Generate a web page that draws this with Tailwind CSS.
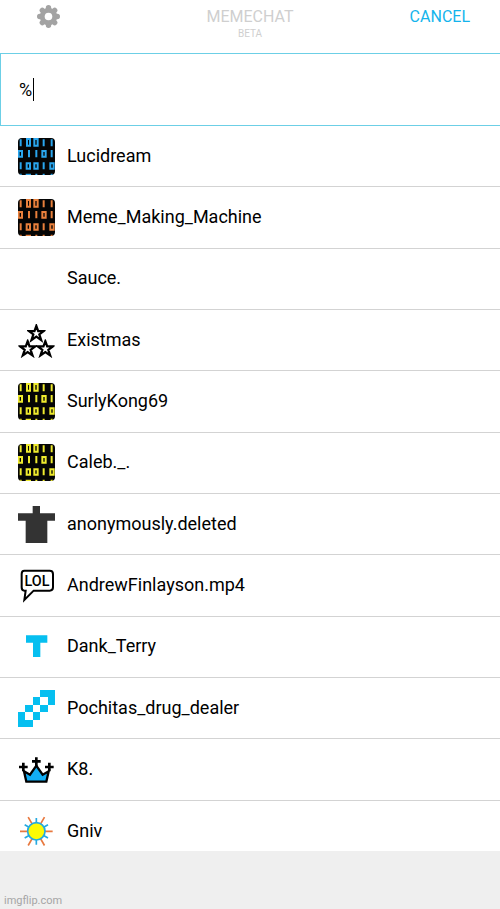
<!DOCTYPE html>
<html lang="en">
<head>
<meta charset="utf-8">
<meta name="viewport" content="width=device-width, initial-scale=1">
<title>Memechat</title>
<script src="https://cdn.jsdelivr.net/npm/@tailwindcss/browser@4"></script>
</head>
<body class="flex h-screen flex-col overflow-hidden bg-white font-['Roboto',sans-serif] text-black">
<svg class="hidden" aria-hidden="true">
  <symbol id="binary" viewBox="0 0 111 111">
    <rect width="111" height="111" fill="#050505"/>
    <g fill="none" stroke="currentColor" stroke-width="6">
      <path d="M8 4v21M77 4v21M101 4v21M33 36v22M55 36v22M101 36v22M8 73v21M77 73v21M8 107v4M55 107v4M77 107v4M101 107v4"/>
      <path d="M27 3h9v20h-9zM49 3h10v20h-10zM2 39h10v17h-10zM73 39h10v17h-10zM26 76h10v16h-10zM49 76h10v16h-10zM97 76h10v16h-10zM26 117v-7h10v7z"/>
    </g>
  </symbol>
  <symbol id="star" viewBox="0 0 50 50">
    <path d="M25 5l5 14h15l-12 9 5 15-13-9-13 9 5-15-12-9h15z" fill="#fff" stroke="#000" stroke-width="6"/>
  </symbol>
</svg>

<header class="grid h-[53px] shrink-0 grid-cols-3 items-start px-[30px]">
  <button type="button" aria-label="Settings" class="mt-[4px] ml-[6px] size-[25px] justify-self-start text-[#a3a3a3]">
    <svg viewBox="0 0 25 25" class="size-full">
      <g stroke="currentColor" stroke-width="5.4" stroke-linecap="round">
        <path d="M12.500 3.700v17.600M3.700 12.500h17.600" /><path d="M6.300 6.300l12.400 12.400M18.700 6.300L6.300 18.700"/>
      </g>
      <circle cx="12.500" cy="12.500" r="6.200" fill="none" stroke="currentColor" stroke-width="5"/>
      <circle cx="12.500" cy="12.500" r="3.800" fill="#fff"/>
    </svg>
  </button>
  <div class="pt-[7px] text-center text-[#cfcfcf]">
    <h1 class="text-[16px] leading-[20px]">MEMECHAT</h1>
    <p class="text-[10px] leading-[14px]">BETA</p>
  </div>
  <button type="button" class="justify-self-end pt-[7px] text-[16px] leading-[20px] text-[#14b4ec]">CANCEL</button>
</header>

<div class="relative flex h-[73px] shrink-0 border border-r-0 border-[#6ccfe6]">
  <input type="text" aria-label="Search users" value="%" class="w-full bg-transparent px-[18px] text-[18px] caret-transparent outline-none">
  <span class="absolute top-[24px] left-[32px] h-[23px] w-[1px] bg-black"></span>
</div>

<main class="min-h-0 flex-1 overflow-hidden">
  <ul class="grid h-[736px] grid-rows-12 text-[18px]">
    <li class="border-b border-[#d3d3d3]"><button type="button" class="flex size-full items-center gap-[12px] px-[18px] text-left"><svg class="size-[37px] rounded-[4px] text-[#2aa6ee]"><use href="#binary"/></svg><span class="pb-[2px]">Lucidream</span></button></li>
    <li class="border-b border-[#d3d3d3]"><button type="button" class="flex size-full items-center gap-[12px] px-[18px] text-left"><svg class="size-[37px] rounded-[4px] text-[#e9803c]"><use href="#binary"/></svg><span class="pb-[2px]">Meme_Making_Machine</span></button></li>
    <li class="border-b border-[#d3d3d3]"><button type="button" class="flex size-full items-center gap-[12px] px-[18px] text-left"><span class="size-[37px]"></span><span class="pb-[2px]">Sauce.</span></button></li>
    <li class="border-b border-[#d3d3d3]"><button type="button" class="flex size-full items-center gap-[12px] px-[18px] text-left"><svg viewBox="0 0 111 111" class="size-[37px]"><use href="#star" x="27" y="6" width="56" height="56"/><use href="#star" x="1" y="52" width="56" height="56"/><use href="#star" x="54" y="52" width="56" height="56"/></svg><span class="pb-[2px]">Existmas</span></button></li>
    <li class="border-b border-[#d3d3d3]"><button type="button" class="flex size-full items-center gap-[12px] px-[18px] text-left"><svg class="size-[37px] rounded-[4px] text-[#eeea2e]"><use href="#binary"/></svg><span class="pb-[2px]">SurlyKong69</span></button></li>
    <li class="border-b border-[#d3d3d3]"><button type="button" class="flex size-full items-center gap-[12px] px-[18px] text-left"><svg class="size-[37px] rounded-[4px] text-[#eeea2e]"><use href="#binary"/></svg><span class="pb-[2px]">Caleb._.</span></button></li>
    <li class="border-b border-[#d3d3d3]"><button type="button" class="flex size-full items-center gap-[12px] px-[18px] text-left"><svg viewBox="0 0 111 111" class="size-[37px]"><path d="M44 0h22v22h45v22H88v67H23V44H0V22h44z" fill="#333"/></svg><span class="pb-[2px]">anonymously.deleted</span></button></li>
    <li class="border-b border-[#d3d3d3]"><button type="button" class="flex size-full items-center gap-[12px] px-[18px] text-left"><svg viewBox="0 0 111 111" class="size-[37px]"><path d="M19 11h76q10 0 10 10v40q0 10-10 10H47L19 99l4-28h-4q-8 0-8-10V21q0-10 8-10z" fill="#fff" stroke="#000" stroke-width="6"/><text x="57" y="57" text-anchor="middle" font-family="Roboto, sans-serif" font-weight="500" font-size="43">LOL</text></svg><span class="pb-[2px]">AndrewFinlayson.mp4</span></button></li>
    <li class="border-b border-[#d3d3d3]"><button type="button" class="flex size-full items-center gap-[12px] px-[18px] text-left"><svg viewBox="0 0 111 111" class="size-[37px]"><path d="M24 22h64v22H67v43H45V44H24z" fill="#06bff0"/></svg><span class="pb-[2px]">Dank_Terry</span></button></li>
    <li class="border-b border-[#d3d3d3]"><button type="button" class="flex size-full items-center gap-[12px] px-[18px] text-left"><svg viewBox="0 0 5 5" class="size-[37px]" shape-rendering="crispEdges"><path d="M3 0h2v2H4V1H3zM2 1h1v1H2zM1 2h1v1H1zM3 2h1v1H3zM2 3h1v1H2zM0 3h1v1h1v1H0z" fill="#06bff0"/></svg><span class="pb-[2px]">Pochitas_drug_dealer</span></button></li>
    <li class="border-b border-[#d3d3d3]"><button type="button" class="flex size-full items-center gap-[12px] px-[18px] text-left"><svg viewBox="0 0 111 111" class="size-[37px]"><path d="M18 61l18 10 19-27 19 27 18-10-7 31H25z" fill="#12aef5" stroke="#000" stroke-width="7"/><path d="M55 19v28M42 31h26M16 35v26M3 48h26M94 35v26M81 48h26" stroke="#000" stroke-width="8"/></svg><span class="pb-[2px]">K8.</span></button></li>
    <li><button type="button" class="flex size-full items-center gap-[12px] px-[18px] text-left"><svg viewBox="-55 -55 111 111" class="size-[37px]"><g stroke-width="5"><path d="M-49 0h98M-24.500-42.400l49 84.800M24.500-42.400l-49 84.800" stroke="#e8793f"/><path d="M0-40v80M-35-20l70 40M35-20l-70 40" stroke="#25a9e0"/></g><circle r="26" fill="#fdfa05" stroke="#25a9e0" stroke-width="5"/></svg><span class="pb-[2px]">Gniv</span></button></li>
  </ul>
</main>

<footer class="flex h-[58px] shrink-0 items-end bg-[#efefef] px-[4px] pb-[1px] text-[11px] leading-[14px] text-[#a5a5a5]">imgflip.com</footer>
</body>
</html>
